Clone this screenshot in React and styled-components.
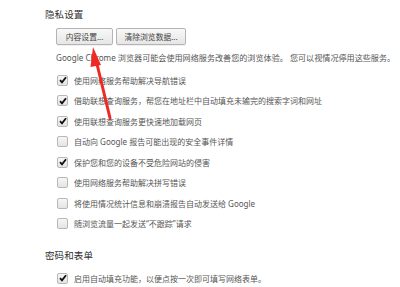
import React from "react";
import styled, { createGlobalStyle } from "styled-components";

const GlobalStyle = createGlobalStyle`
    html, body {
        margin: 0;
        padding: 0;
        background: #fff;
        overflow: hidden;
    }
    body {
        font-family: "Noto Sans", "Noto Sans CJK SC", sans-serif;
    }
`;

const Page = styled.div`
    position: relative;
    width: 400px;
    height: 287px;
    padding: 9px 0 0 45px;
    box-sizing: border-box;
    overflow: hidden;
`;

const Heading = styled.h2`
    margin: ${(p) => p.$top || 0}px 0 0 0;
    font-size: 9.5px;
    line-height: 12px;
    font-weight: normal;
    color: #303030;
    letter-spacing: 0.1px;
`;

const Section = styled.div`
    padding-left: 11px;
`;

const ButtonRow = styled.div`
    display: flex;
    gap: 3px;
    margin-top: 7px;
`;

const Button = styled.button`
    width: ${(p) => p.$w}px;
    height: 17px;
    padding: 0;
    font-family: inherit;
    font-size: 7.8px;
    color: #444;
    border: 1px solid #b4b4b4;
    border-radius: 2px;
    background: linear-gradient(#f8f8f8, #e6e6e6);
    box-shadow: 0 1px 0 rgba(0, 0, 0, 0.06);
`;

const Desc = styled.p`
    margin: 8px 0 7px;
    font-size: 8.1px;
    line-height: 10px;
    color: #555;
    white-space: nowrap;
`;

const Row = styled.label`
    display: flex;
    align-items: center;
    gap: 6px;
    height: 20.5px;
    padding-left: 1px;
    font-size: 8px;
    color: #555;
    white-space: nowrap;
`;

const Box = styled.span`
    width: 9px;
    height: 9px;
    flex: none;
    border: 1px solid #b8b8b8;
    border-radius: 2px;
    background: linear-gradient(#f6f6f6, #e4e4e4);
    display: flex;
    align-items: center;
    justify-content: center;
`;

const Arrow = styled.svg`
    position: absolute;
    left: 0;
    top: 0;
    pointer-events: none;
`;

const Check = ({ on }) => (
    <Box>
        {on && (
            <svg width="8" height="8" viewBox="0 0 8 8">
                <path d="M1 4.2 L3 6.4 L7 1.2" fill="none" stroke="#111" strokeWidth="1.8" />
            </svg>
        )}
    </Box>
);

const privacy = [
    ["使用网络服务帮助解决导航错误", true],
    ["借助联想查询服务，帮您在地址栏中自动填充未输完的搜索字词和网址", true],
    ["使用联想查询服务更快速地加载网页", true],
    ["自动向 Google 报告可能出现的安全事件详情", false],
    ["保护您和您的设备不受危险网站的侵害", true],
    ["使用网络服务帮助解决拼写错误", false],
    ["将使用情况统计信息和崩溃报告自动发送给 Google", false],
    ["随浏览流量一起发送“不跟踪”请求", false],
];

const App = () => {
    return (
        <Page>
            <GlobalStyle />
            <Heading>隐私设置</Heading>
            <Section>
                <ButtonRow>
                    <Button $w={57}>内容设置...</Button>
                    <Button $w={70}>清除浏览数据...</Button>
                </ButtonRow>
                <Desc>Google Chrome 浏览器可能会使用网络服务改善您的浏览体验。 您可以视情况停用这些服务。</Desc>
                {privacy.map(([text, on]) => (
                    <Row key={text}>
                        <Check on={on} />
                        {text}
                    </Row>
                ))}
            </Section>
            <Heading $top={16}>密码和表单</Heading>
            <Section>
                <Row style={{ marginTop: 6 }}>
                    <Check on />
                    启用自动填充功能，以便点按一次即可填写网络表单。
                </Row>
            </Section>
            <Arrow width="400" height="287">
                <line x1="110" y1="118" x2="96.5" y2="62" stroke="#ee2a24" strokeWidth="3" strokeLinecap="round" />
                <polygon points="93,47 101,65 90.5,67" fill="#ee2a24" />
            </Arrow>
        </Page>
    );
};

export default App;
